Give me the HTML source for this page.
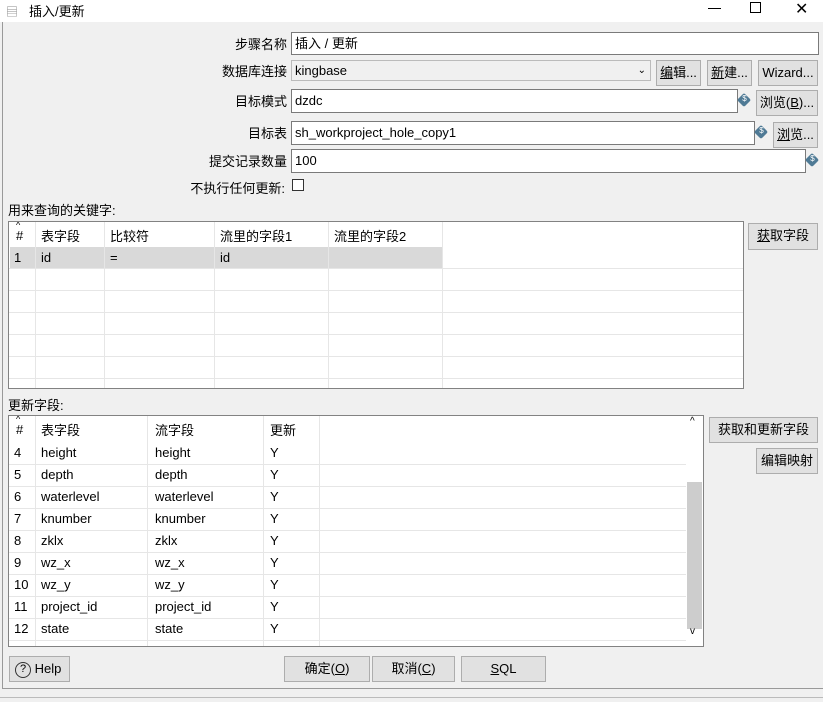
<!DOCTYPE html>
<html><head><meta charset="utf-8"><style>
*{box-sizing:border-box;margin:0;padding:0}
body{width:823px;height:702px;background:#f0f0f0;font-family:"Liberation Sans","Noto Sans CJK SC",sans-serif;font-size:13px;color:#000;position:relative;overflow:hidden}
.a{position:absolute}
.title{left:0;top:0;width:823px;height:22px;background:#fff}
.in{position:absolute;background:#fff;border:1px solid #7a7a7a;padding:0 3px;line-height:21px;white-space:nowrap}
.btn{position:absolute;background:#e1e1e1;border:1px solid #adadad;text-align:center;line-height:23px;white-space:nowrap}
.lbl{position:absolute;text-align:right;white-space:nowrap}
.dol{position:absolute;width:10px;height:10px;background:#4f7a95;transform:rotate(45deg);border-radius:2px}
.dol:after{content:"$";position:absolute;transform:rotate(-45deg);color:#fff;font-size:8px;left:2px;top:-1px}
.tbl{position:absolute;background:#fff;border:1px solid #828282;overflow:hidden}
.hl{position:absolute;height:1px;background:#e6e6e6}
.vl{position:absolute;width:1px;background:#e6e6e6}
.c{position:absolute;white-space:nowrap}
u{text-decoration:underline}
</style></head><body>
<div class="a title"></div>
<div class="a" style="left:6px;top:3px;font-size:12px;color:#888">▤</div>
<div class="a" style="left:29px;top:1px;font-size:13px">插入/更新</div>
<div class="a" style="left:708px;top:8px;width:13px;height:1px;background:#000"></div>
<div class="a" style="left:750px;top:2px;width:11px;height:11px;border:1px solid #000"></div>
<div class="a" style="left:795px;top:-1px;font-size:16px">✕</div>
<div class="a" style="left:2px;top:22px;width:1px;height:667px;background:#999"></div>
<div class="a" style="left:2px;top:688px;width:821px;height:1px;background:#999"></div>
<div class="a" style="left:0;top:697px;width:823px;height:1px;background:#bbb"></div>

<div class="lbl" style="right:536px;top:34px">步骤名称</div>
<div class="in" style="left:291px;top:32px;width:528px;height:23px">插入 / 更新</div>
<div class="lbl" style="right:536px;top:61px">数据库连接</div>
<div class="in" style="left:291px;top:60px;width:360px;height:21px;background:#f0f0f0;border-color:#bbb;line-height:19px">kingbase<span style="position:absolute;right:4px;top:0;font-size:10px">⌄</span></div>
<div class="btn" style="left:656px;top:60px;width:45px;height:26px"><u>编</u>辑...</div>
<div class="btn" style="left:707px;top:60px;width:45px;height:26px"><u>新</u>建...</div>
<div class="btn" style="left:758px;top:60px;width:60px;height:26px">Wizard...</div>
<div class="lbl" style="right:536px;top:91px">目标模式</div>
<div class="in" style="left:291px;top:89px;width:447px;height:24px">dzdc</div>
<div class="dol" style="left:739px;top:95px"></div>
<div class="btn" style="left:756px;top:90px;width:62px;height:26px">浏览(<u>B</u>)...</div>
<div class="lbl" style="right:536px;top:123px">目标表</div>
<div class="in" style="left:291px;top:121px;width:464px;height:24px">sh_workproject_hole_copy1</div>
<div class="dol" style="left:756px;top:127px"></div>
<div class="btn" style="left:773px;top:122px;width:45px;height:26px"><u>浏</u>览...</div>
<div class="lbl" style="right:536px;top:151px">提交记录数量</div>
<div class="in" style="left:291px;top:149px;width:515px;height:24px">100</div>
<div class="dol" style="left:807px;top:155px"></div>
<div class="lbl" style="right:538px;top:178px">不执行任何更新:</div>
<div class="a" style="left:292px;top:179px;width:12px;height:12px;border:1px solid #333;background:#fff"></div>

<div class="a" style="left:8px;top:200px">用来查询的关键字:</div>
<div class="tbl" style="left:8px;top:221px;width:736px;height:168px">
 <div class="a" style="left:1px;top:25px;width:433px;height:21px;background:#d9d9d9"></div>
 <div class="vl" style="left:26px;top:0;height:168px"></div>
 <div class="vl" style="left:95px;top:0;height:168px"></div>
 <div class="vl" style="left:205px;top:0;height:168px"></div>
 <div class="vl" style="left:319px;top:0;height:168px"></div>
 <div class="vl" style="left:433px;top:0;height:168px"></div>
 <div class="hl" style="left:0;top:46px;width:735px"></div>
 <div class="hl" style="left:0;top:68px;width:735px"></div>
 <div class="hl" style="left:0;top:90px;width:735px"></div>
 <div class="hl" style="left:0;top:112px;width:735px"></div>
 <div class="hl" style="left:0;top:134px;width:735px"></div>
 <div class="hl" style="left:0;top:156px;width:735px"></div>
 <div class="c" style="left:7px;top:-2px;font-size:9px">^</div>
 <div class="c" style="left:7px;top:6px">#</div>
 <div class="c" style="left:32px;top:4px">表字段</div>
 <div class="c" style="left:101px;top:4px">比较符</div>
 <div class="c" style="left:211px;top:4px">流里的字段1</div>
 <div class="c" style="left:325px;top:4px">流里的字段2</div>
 <div class="c" style="left:5px;top:28px">1</div>
 <div class="c" style="left:32px;top:28px">id</div>
 <div class="c" style="left:101px;top:28px">=</div>
 <div class="c" style="left:211px;top:28px">id</div>
</div>
<div class="btn" style="left:748px;top:223px;width:70px;height:27px"><u>获</u>取字段</div>

<div class="a" style="left:8px;top:395px">更新字段:</div>
<div class="tbl" style="left:8px;top:415px;width:696px;height:232px">
 <div class="vl" style="left:26px;top:0;height:232px"></div>
 <div class="vl" style="left:138px;top:0;height:232px"></div>
 <div class="vl" style="left:254px;top:0;height:232px"></div>
 <div class="vl" style="left:310px;top:0;height:232px"></div>
 <div class="hl" style="left:0;top:48px;width:677px"></div>
 <div class="hl" style="left:0;top:70px;width:677px"></div>
 <div class="hl" style="left:0;top:92px;width:677px"></div>
 <div class="hl" style="left:0;top:114px;width:677px"></div>
 <div class="hl" style="left:0;top:136px;width:677px"></div>
 <div class="hl" style="left:0;top:158px;width:677px"></div>
 <div class="hl" style="left:0;top:180px;width:677px"></div>
 <div class="hl" style="left:0;top:202px;width:677px"></div>
 <div class="hl" style="left:0;top:224px;width:677px"></div>
 <div class="a" style="left:678px;top:66px;width:15px;height:147px;background:#cdcdcd"></div>
 <div class="c" style="left:681px;top:0px;font-size:10px">^</div>
 <div class="c" style="left:681px;top:210px;font-size:10px">v</div>
 <div class="c" style="left:7px;top:-2px;font-size:9px">^</div>
 <div class="c" style="left:7px;top:6px">#</div>
 <div class="c" style="left:32px;top:4px">表字段</div>
 <div class="c" style="left:146px;top:4px">流字段</div>
 <div class="c" style="left:261px;top:4px">更新</div>
 <div class="c" style="left:5px;top:26px;line-height:22px">4<br>5<br>6<br>7<br>8<br>9<br>10<br>11<br>12</div>
 <div class="c" style="left:32px;top:26px;line-height:22px">height<br>depth<br>waterlevel<br>knumber<br>zklx<br>wz_x<br>wz_y<br>project_id<br>state</div>
 <div class="c" style="left:146px;top:26px;line-height:22px">height<br>depth<br>waterlevel<br>knumber<br>zklx<br>wz_x<br>wz_y<br>project_id<br>state</div>
 <div class="c" style="left:261px;top:26px;line-height:22px">Y<br>Y<br>Y<br>Y<br>Y<br>Y<br>Y<br>Y<br>Y</div>
</div>
<div class="btn" style="left:709px;top:417px;width:109px;height:26px">获取和更新字段</div>
<div class="btn" style="left:756px;top:448px;width:62px;height:26px">编辑映射</div>

<div class="btn" style="left:9px;top:656px;width:61px;height:26px;text-align:left;padding-left:5px"><span style="display:inline-block;width:16px;height:16px;border:1.5px solid #333;border-radius:50%;font-size:11px;line-height:13px;text-align:center;vertical-align:middle">?</span> Help</div>
<div class="btn" style="left:284px;top:656px;width:86px;height:26px">确定(<u>O</u>)</div>
<div class="btn" style="left:372px;top:656px;width:83px;height:26px">取消(<u>C</u>)</div>
<div class="btn" style="left:461px;top:656px;width:85px;height:26px"><u>S</u>QL</div>
</body></html>
